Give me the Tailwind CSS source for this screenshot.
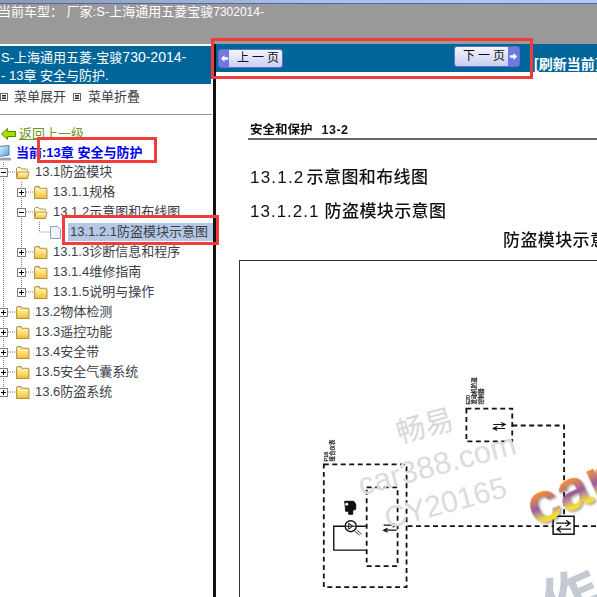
<!DOCTYPE html>
<html lang="zh-CN">

<head>
    <meta charset="UTF-8" />
    <meta name="viewport" content="width=device-width, initial-scale=1.0" />
    <title>维修手册</title>
    <script src="https://cdn.jsdelivr.net/npm/@tailwindcss/browser@4"></script>
</head>

<body class="bg-white">
    <!-- shared tree icons -->
    <svg width="0" height="0" class="absolute">
        <defs>
            <linearGradient id="gold" x1="0" y1="0" x2="0" y2="1">
                <stop offset="0" stop-color="#fff8d4" />
                <stop offset="0.5" stop-color="#ffdf78" />
                <stop offset="1" stop-color="#f0bc3a" />
            </linearGradient>
            <linearGradient id="screen" x1="0" y1="0" x2="1" y2="1">
                <stop offset="0" stop-color="#e4f4ff" />
                <stop offset="1" stop-color="#4f9fe0" />
            </linearGradient>
            <symbol id="folder" viewBox="0 0 14 13">
                <path d="M1.5 12.5V2.5l1-1h3l1 1.5h5.5l1 1v8.5z" fill="url(#gold)" stroke="#b0923f" />
            </symbol>
            <symbol id="folder-open" viewBox="0 0 15 13">
                <path d="M1.5 11V2.5l1-1h3l1 1.5h5l1 1v1" fill="#fff8d0" stroke="#b0923f" />
                <path d="M1.5 12.5l1.5-6.5h11l-1.5 6.5z" fill="url(#gold)" stroke="#b0923f" />
            </symbol>
            <symbol id="plus" viewBox="0 0 9 9">
                <rect x="0.5" y="0.5" width="8" height="8" fill="#fff" stroke="#7f7f7f" />
                <path d="M2 4.5h5M4.5 2v5" stroke="#000" />
            </symbol>
            <symbol id="minus" viewBox="0 0 9 9">
                <rect x="0.5" y="0.5" width="8" height="8" fill="#fff" stroke="#7f7f7f" />
                <path d="M2 4.5h5" stroke="#000" />
            </symbol>
            <symbol id="menu-box" viewBox="0 0 8 8">
                <rect x="0.5" y="0.5" width="7" height="7" fill="#fff" stroke="#666" />
                <path d="M2 2.5h4M2 4h4M2 5.5h4" stroke="#222" />
            </symbol>
        </defs>
    </svg>

    <div class="relative w-[597px] h-[597px] overflow-hidden bg-white font-['Liberation_Sans','Noto_Sans_CJK_SC',sans-serif]">

        <!-- top bar -->
        <header class="h-[44px] bg-[#999999] overflow-hidden">
            <div class="h-[4px] bg-gradient-to-r from-[#8f98a8] via-[#aebde0] to-[#b9c9ec] border-b border-[#4668c4]"></div>
            <p class="ml-[-2px] text-[13px] leading-[16px] text-white whitespace-nowrap">当前车型： 厂家:S-上海通用五菱宝骏<span class="text-[12px]">7302014-</span></p>
        </header>

        <div class="flex h-[553px]">
            <!-- left menu -->
            <aside class="w-[213px] shrink-0 overflow-hidden text-[13px] text-[#3c4048]">
                <div class="mt-[2px] h-[38px] w-[211px] bg-[#006699] pl-[1px] pt-[2px] text-[13px] leading-[18px] text-white whitespace-nowrap">
                    <p>S-上海通用五菱-宝骏<span class="text-[14px]">730-2014-</span></p>
                    <p>- 13章 安全与防护.</p>
                </div>

                <div class="flex items-center h-[31px] border-b border-[#999999] pb-[4px] mr-[1px]">
                    <svg class="w-[8px] h-[8px]"><use href="#menu-box" /></svg>
                    <span class="ml-[6px]">菜单展开</span>
                    <svg class="ml-[7px] w-[8px] h-[8px]"><use href="#menu-box" /></svg>
                    <span class="ml-[7px]">菜单折叠</span>
                </div>

                <div class="mt-[9px] flex items-center h-[20px]">
                    <svg class="ml-[1px] w-[15px] h-[12px]" viewBox="0 0 15 12">
                        <path d="M0.5 6L6.5 0.5V3.5H14.5V8.5H6.5V11.5z" fill="#a6e000" stroke="#4e8a00" />
                    </svg>
                    <a class="ml-[3px] text-[#6b9a1f] underline">返回上一级</a>
                </div>
                <div class="flex items-center h-[18px]">
                    <svg class="w-[12px] h-[16px]" viewBox="0 0 12 16">
                        <path d="M-1 1.5L9 0.5V10L-1 11.5z" fill="url(#screen)" stroke="#5a7fa8" />
                        <path d="M1 13h9l1 2H0z" fill="#a9b4c4" stroke="#6f7f96" stroke-width="0.6" />
                    </svg>
                    <span class="ml-[4px] font-bold text-[#0000ee]">当前:13章 安全与防护</span>
                </div>

                <!-- tree -->
                <div class="relative">
                    <svg class="absolute left-0 top-0" width="60" height="240" fill="none" stroke="#808080" stroke-dasharray="1 1">
                        <path d="M3.5 0V230M21.5 20V130" />
                        <path d="M8 10h7M8 150h7M8 170h7M8 190h7M8 210h7M8 230h7" />
                        <path d="M26 30h7M26 50h7M26 90h7M26 110h7M26 130h7" />
                        <path d="M39.5 60V70H50" />
                    </svg>
                    <ul class="relative">
                        <li class="flex items-center h-[20px]"><svg class="ml-[-1px] w-[9px] h-[9px]"><use href="#minus" /></svg><svg class="ml-[7px] w-[15px] h-[13px]"><use href="#folder-open" /></svg><span class="ml-[5px]">13.1防盗模块</span></li>
                        <li class="flex items-center h-[20px] pl-[17px]"><svg class="w-[9px] h-[9px]"><use href="#plus" /></svg><svg class="ml-[7px] w-[15px] h-[14px]"><use href="#folder" /></svg><span class="ml-[5px]">13.1.1规格</span></li>
                        <li class="flex items-center h-[20px] pl-[17px]"><svg class="w-[9px] h-[9px]"><use href="#minus" /></svg><svg class="ml-[7px] w-[15px] h-[13px]"><use href="#folder-open" /></svg><span class="ml-[5px]">13.1.2示意图和布线图</span></li>
                        <li class="flex items-center h-[20px] pl-[50px]">
                            <svg class="w-[11px] h-[13px]" viewBox="0 0 11 13">
                                <path d="M0.5 0.5H7.5L10.5 3.5V12.5H0.5z" fill="#eef3fb" stroke="#8aa0c4" />
                            </svg>
                            <span class="ml-[7px] flex-1 h-[18px] leading-[18px] bg-[#b7c8e4] pl-[2px]">13.1.2.1防盗模块示意图</span>
                        </li>
                        <li class="flex items-center h-[20px] pl-[17px]"><svg class="w-[9px] h-[9px]"><use href="#plus" /></svg><svg class="ml-[7px] w-[15px] h-[14px]"><use href="#folder" /></svg><span class="ml-[5px]">13.1.3诊断信息和程序</span></li>
                        <li class="flex items-center h-[20px] pl-[17px]"><svg class="w-[9px] h-[9px]"><use href="#plus" /></svg><svg class="ml-[7px] w-[15px] h-[14px]"><use href="#folder" /></svg><span class="ml-[5px]">13.1.4维修指南</span></li>
                        <li class="flex items-center h-[20px] pl-[17px]"><svg class="w-[9px] h-[9px]"><use href="#plus" /></svg><svg class="ml-[7px] w-[15px] h-[14px]"><use href="#folder" /></svg><span class="ml-[5px]">13.1.5说明与操作</span></li>
                        <li class="flex items-center h-[20px]"><svg class="ml-[-1px] w-[9px] h-[9px]"><use href="#plus" /></svg><svg class="ml-[7px] w-[15px] h-[14px]"><use href="#folder" /></svg><span class="ml-[5px]">13.2物体检测</span></li>
                        <li class="flex items-center h-[20px]"><svg class="ml-[-1px] w-[9px] h-[9px]"><use href="#plus" /></svg><svg class="ml-[7px] w-[15px] h-[14px]"><use href="#folder" /></svg><span class="ml-[5px]">13.3遥控功能</span></li>
                        <li class="flex items-center h-[20px]"><svg class="ml-[-1px] w-[9px] h-[9px]"><use href="#plus" /></svg><svg class="ml-[7px] w-[15px] h-[14px]"><use href="#folder" /></svg><span class="ml-[5px]">13.4安全带</span></li>
                        <li class="flex items-center h-[20px]"><svg class="ml-[-1px] w-[9px] h-[9px]"><use href="#plus" /></svg><svg class="ml-[7px] w-[15px] h-[14px]"><use href="#folder" /></svg><span class="ml-[5px]">13.5安全气囊系统</span></li>
                        <li class="flex items-center h-[20px]"><svg class="ml-[-1px] w-[9px] h-[9px]"><use href="#plus" /></svg><svg class="ml-[7px] w-[15px] h-[14px]"><use href="#folder" /></svg><span class="ml-[5px]">13.6防盗系统</span></li>
                    </ul>
                </div>
            </aside>

            <!-- page viewer -->
            <main class="relative flex-1 min-w-0 border-l-[3px] border-[#111111] overflow-hidden">
                <div class="flex items-center h-[28px] bg-[#006699] pl-[2px] whitespace-nowrap">
                    <button class="flex items-center w-[67px] h-[19px] rounded-[3px] border border-[#6670c8] bg-gradient-to-b from-[#f4f5ff] to-[#c9cef2] text-[12px] text-[#111111]">
                        <span class="flex items-center justify-center w-[10px] h-full bg-[#6f78e0]">
                            <svg class="w-[9px] h-[9px]" viewBox="0 0 10 10"><path d="M1 5l4-4v2.5h4v3H5V9z" fill="#fff" /></svg>
                        </span>
                        <span class="flex-1 text-left pl-[8px] tracking-[3px]">上一页</span>
                    </button>
                    <button class="ml-[171px] mt-[-4px] flex items-center w-[68px] h-[21px] rounded-[3px] border border-[#6670c8] bg-gradient-to-b from-[#f4f5ff] to-[#c9cef2] text-[12px] text-[#111111]">
                        <span class="flex-1 text-left pl-[8px] tracking-[3px]">下一页</span>
                        <span class="flex items-center justify-center w-[11px] h-full bg-[#6f78e0]">
                            <svg class="w-[9px] h-[9px]" viewBox="0 0 10 10"><path d="M9 5L5 1v2.5H1v3h4V9z" fill="#fff" /></svg>
                        </span>
                    </button>
                    <span class="ml-[14px] mt-[12px] text-[14px] font-bold text-white">[刷新当前页]</span>
                </div>

                <!-- scanned page -->
                <div class="relative blur-[0.4px] text-[#111111] whitespace-nowrap">
                    <div class="ml-[32px] mt-[50px] mr-[-10px] h-[18px] border-b-2 border-[#666666] pl-[2px] pt-[1px] text-[12.5px] leading-[14px] font-bold">安全和保护<span class="ml-[9px] tracking-[0.5px]">13-2</span></div>
                    <p class="ml-[34px] mt-[28px] text-[17px] leading-[20px] font-medium tracking-[0.4px]"><span class="mr-[-3px] tracking-[1.2px]">13.1.2</span> 示意图和布线图</p>
                    <p class="ml-[34px] mt-[14px] text-[17px] leading-[20px] font-medium tracking-[0.4px]"><span class="tracking-[1px]">13.1.2.1</span> 防盗模块示意图</p>
                    <p class="ml-[287px] mt-[9px] text-[17px] leading-[20px] font-medium tracking-[0.4px]">防盗模块示意图</p>

                    <!-- wiring diagram, page coords offset by main's left edge -->
                    <svg class="mt-[9px] ml-[23px] border-l border-t border-[#333333]" width="372" height="340" viewBox="239 261 372 340" fill="none" stroke="#111111">
                        <g stroke-width="1.8" stroke-dasharray="5 3.5">
                            <rect x="323" y="465" width="83" height="123" />
                            <rect x="366" y="488" width="31" height="79" />
                            <rect x="466" y="409" width="46" height="33" />
                            <path d="M512 426H564V517M407 527H553M574 527H600" />
                        </g>
                        <path d="M366 527H333V551H366" stroke-width="1.4" />
                        <circle cx="350" cy="527" r="5.5" fill="#fff" stroke-width="1.4" />
                        <path d="M345 527h10M348 524v6l4-3z" stroke-width="1" />
                        <path d="M354 532l5 4M356 531l5 4" stroke-width="0.8" />
                        <path d="M344 502h9l2 3v5l-3 1v4h-4v-3h-3z" fill="#111111" stroke-width="1" />
                        <circle cx="346" cy="505" r="1.5" fill="#fff" stroke="none" />
                        <rect x="553" y="517" width="21" height="18" fill="#fff" stroke-width="1.5" />
                        <path d="M556 524H570M566 521l4 3-4 3M571 530H557M561 527l-4 3 4 3" stroke-width="1.3" />
                        <path d="M493 425H505M501 423l4 2-4 2M505 429H493M497 427l-4 2 4 2" stroke-width="1.2" />
                        <path d="M383 526H396M392 524l4 2-4 2M396 531H383M387 529l-4 2 4 2" stroke-width="1.2" />
                        <g fill="#111111" stroke="#111111" stroke-width="0.2" font-size="5.5">
                            <text transform="translate(327 462) rotate(-90)">P16</text>
                            <text transform="translate(333 462) rotate(-90)">组合仪表</text>
                            <text transform="translate(470 405) rotate(-90)">E20</text>
                            <text transform="translate(476 405) rotate(-90)">发动机防盗</text>
                            <text transform="translate(483 405) rotate(-90)">控制器</text>
                        </g>
                    </svg>
                </div>

                <!-- watermarks -->
                <div class="absolute left-[180px] top-[368px] -rotate-[15deg] text-[29px] leading-none text-[#d8d8d8]">畅易</div>
                <div class="absolute left-[140px] top-[405px] -rotate-[15deg] text-[31px] leading-none text-[#dcdcdc]">car388.com</div>
                <div class="absolute left-[167px] top-[444px] -rotate-[15deg] text-[30px] leading-none text-[#dcdcdc]">CY20165</div>
                <div class="absolute left-[308px] top-[418px] -rotate-[24deg] text-[58px] leading-none font-bold text-transparent bg-clip-text bg-gradient-to-b from-[#f08a2c] from-35% via-[#9a5aa0] via-58% to-[#f4dc30] to-78% drop-shadow-[1px_2px_1px_rgba(0,0,0,0.35)]">car</div>
                <div class="absolute left-[326px] top-[526px] -rotate-[24deg] text-[58px] leading-none font-bold text-[#c3cad4]">作</div>
            </main>
        </div>

        <!-- red annotation boxes -->
        <div class="absolute left-[211px] top-[38px] w-[322px] h-[41px] border-[3px] border-[#f03c3c]"></div>
        <div class="absolute left-[37px] top-[137px] w-[120px] h-[26px] border-[3px] border-[#f03c3c]"></div>
        <div class="absolute left-[62px] top-[215px] w-[157px] h-[30px] border-[3px] border-[#f03c3c]"></div>
    </div>
</body>

</html>
